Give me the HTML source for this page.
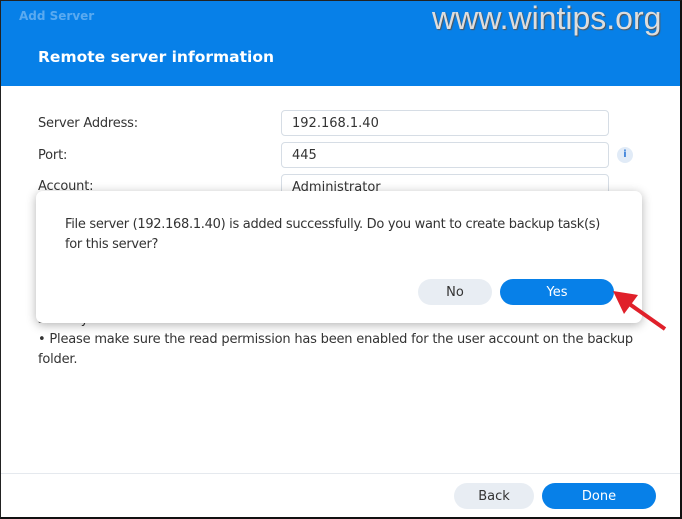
<!DOCTYPE html>
<html><head><style>
*{margin:0;padding:0;box-sizing:border-box}
body{width:682px;height:519px;overflow:hidden;font-family:"DejaVu Sans","Liberation Sans",sans-serif;position:relative;background:#fff;color:#333}
.frame{position:absolute;left:0;top:0;width:682px;height:519px;border:1px solid #222;border-right:2px solid #111;border-bottom:2px solid #111;pointer-events:none;z-index:9}
.hdr{position:absolute;left:0;top:0;width:682px;height:86px;background:#0780e8}
.t1{position:absolute;left:19px;top:9px;font-size:12px;font-weight:bold;color:#5aaaf0}
.wm{position:absolute;left:432px;top:0px;font-family:"Liberation Sans",sans-serif;font-size:32px;color:#ddd;text-shadow:1px 1px 1px #555}
.t2{position:absolute;left:38px;top:48px;font-size:15.5px;font-weight:bold;color:#fff}
.lbl{position:absolute;left:38px;font-size:13px;color:#333;letter-spacing:-0.2px}
.inp{position:absolute;left:281px;width:328px;height:26px;border:1px solid #d6dde5;border-radius:4px;font-size:13px;padding:5px 10px}
.info{position:absolute;left:617px;top:147px;width:16px;height:16px;border-radius:50%;background:#e1ebf7;color:#3a80d9;font-size:10px;font-weight:bold;text-align:center;line-height:16px}
.note{position:absolute;left:38px;font-size:13px;color:#333;letter-spacing:-0.2px}
.dlg{position:absolute;left:36px;top:191px;width:606px;height:132px;background:#fff;border-radius:7px;box-shadow:0 2px 10px rgba(0,0,0,.3)}
.msg{position:absolute;left:29px;top:24px;font-size:13px;line-height:20px;color:#333;width:580px;letter-spacing:-0.3px;white-space:nowrap}
.btn{position:absolute;height:26px;border-radius:13px;font-size:13px;text-align:center;line-height:27px}
.g{background:#e8edf3;color:#333}
.b{background:#0780e8;color:#fff}
.fline{position:absolute;left:0;top:473px;width:682px;height:1px;background:#e5e9ee}
</style></head><body>
<div class="hdr"></div>
<div class="t1">Add Server</div>
<div class="wm">www.wintips.org</div>
<div class="t2">Remote server information</div>
<div class="lbl" style="top:116px">Server Address:</div>
<div class="inp" style="top:110px">192.168.1.40</div>
<div class="lbl" style="top:148px">Port:</div>
<div class="inp" style="top:142px">445</div>
<div class="info">i</div>
<div class="lbl" style="top:179px">Account:</div>
<div class="inp" style="top:174px">Administrator</div>
<div class="note" style="top:312px">security.</div>
<div class="note" style="top:332px">• Please make sure the read permission has been enabled for the user account on the backup</div>
<div class="note" style="top:352px">folder.</div>
<div class="dlg">
<div class="msg">File server (192.168.1.40) is added successfully. Do you want to create backup task(s)<br>for this server?</div>
<div class="btn g" style="left:382px;top:88px;width:74px">No</div>
<div class="btn b" style="left:464px;top:88px;width:114px">Yes</div>
</div>
<svg style="position:absolute;left:0;top:0" width="682" height="519"><line x1="665" y1="329" x2="628" y2="303" stroke="#e0202a" stroke-width="4"/><polygon points="613,291 638,295 624,314" fill="#e0202a"/></svg>
<div class="fline"></div>
<div class="btn g" style="left:454px;top:483px;width:80px">Back</div>
<div class="btn b" style="left:542px;top:483px;width:114px">Done</div>
<div class="frame"></div>
</body></html>
